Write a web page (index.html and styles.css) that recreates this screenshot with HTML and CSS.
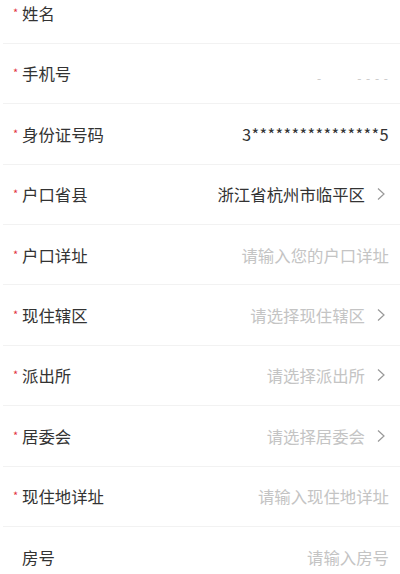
FILE: index.html
```html
<!DOCTYPE html>
<html>
<head>
    <title>登记信息</title>
    <link rel="stylesheet" href="styles.css">
</head>
<body>
    <div class="form">
        <div class="row">
            <span class="label"><i class="req">*</i>姓名</span>
        </div>
        <div class="row">
            <span class="label"><i class="req">*</i>手机号</span>
            <span class="masked"><b>-</b><b class="wide">- - - -</b></span>
        </div>
        <div class="row">
            <span class="label"><i class="req">*</i>身份证号码</span>
            <span class="value id">3****************5</span>
        </div>
        <div class="row">
            <span class="label"><i class="req">*</i>户口省县</span>
            <span class="value">浙江省杭州市临平区</span>
            <svg class="arrow" viewBox="0 0 10 14"><path d="M2 1.5 L8 7 L2 12.5"/></svg>
        </div>
        <div class="row">
            <span class="label"><i class="req">*</i>户口详址</span>
            <span class="hint">请输入您的户口详址</span>
        </div>
        <div class="row">
            <span class="label"><i class="req">*</i>现住辖区</span>
            <span class="hint">请选择现住辖区</span>
            <svg class="arrow" viewBox="0 0 10 14"><path d="M2 1.5 L8 7 L2 12.5"/></svg>
        </div>
        <div class="row">
            <span class="label"><i class="req">*</i>派出所</span>
            <span class="hint">请选择派出所</span>
            <svg class="arrow" viewBox="0 0 10 14"><path d="M2 1.5 L8 7 L2 12.5"/></svg>
        </div>
        <div class="row">
            <span class="label"><i class="req">*</i>居委会</span>
            <span class="hint">请选择居委会</span>
            <svg class="arrow" viewBox="0 0 10 14"><path d="M2 1.5 L8 7 L2 12.5"/></svg>
        </div>
        <div class="row">
            <span class="label"><i class="req">*</i>现住地详址</span>
            <span class="hint">请输入现住地详址</span>
        </div>
        <div class="row">
            <span class="label"><i class="req"></i>房号</span>
            <span class="hint">请输入房号</span>
        </div>
    </div>
</body>
</html>
```

FILE: styles.css
```css
body {
    margin: 0;
    background: #fff;
    font-family: "Noto Sans CJK SC", "Noto Sans", sans-serif;
    overflow: hidden;
}
.form {
    margin-top: -16.6px;
}
.row {
    display: flex;
    align-items: center;
    height: 59.4px;
    margin-left: 3px;
    padding: 0 11px 0 10px;
    border-top: 1px solid #f2f2f2;
}
.row:first-child {
    border-top: none;
}
.label {
    flex: 1;
    display: flex;
    align-items: center;
    font-size: 16.4px;
    color: #333;
}
.req {
    display: inline-block;
    width: 9px;
    font-style: normal;
    font-size: 11px;
    color: #e2333f;
    position: relative;
    top: -1px;
}
.value {
    font-size: 16.4px;
    color: #333;
}
.value.id {
    letter-spacing: 0.35px;
}
.hint {
    font-size: 16.4px;
    color: #c4c4c4;
}
.arrow {
    width: 10px;
    height: 14px;
    margin-left: 11px;
    margin-right: 3px;
    fill: none;
    stroke: #999;
    stroke-width: 1.2;
}
.masked {
    display: flex;
    align-items: center;
    font-size: 12px;
    color: #c8c8c8;
    padding-top: 8px;
}
.masked b {
    font-weight: normal;
}
.masked .wide {
    margin-left: 36px;
    letter-spacing: 1px;
}
```
